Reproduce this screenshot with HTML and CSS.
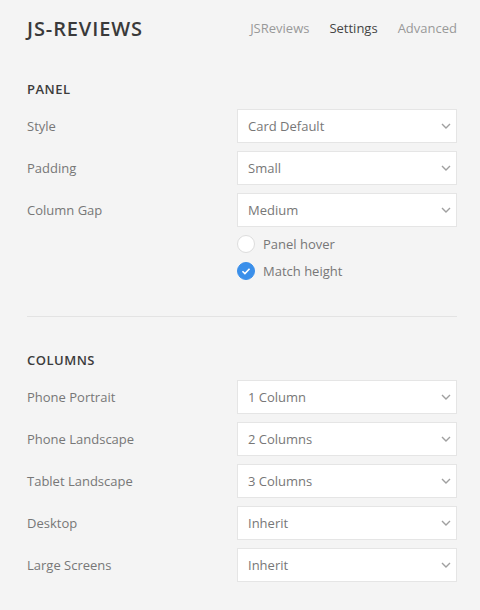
FILE: index.html
```html
<!DOCTYPE html>
<html>
<head>
<meta charset="utf-8">
<link rel="stylesheet" href="styles.css">
</head>
<body>
<div class="page">
  <header class="top">
    <div class="logo">JS-REVIEWS</div>
    <nav class="nav">
      <span class="nav-item">JSReviews</span>
      <span class="nav-item active">Settings</span>
      <span class="nav-item">Advanced</span>
    </nav>
  </header>

  <section class="section panel">
    <h2 class="section-title">PANEL</h2>
    <div class="row"><div class="label">Style</div><div class="select"><span>Card Default</span><svg class="chev" viewBox="0 0 10 6"><path d="M1 1 L5 5 L9 1"/></svg></div></div>
    <div class="row"><div class="label">Padding</div><div class="select"><span>Small</span><svg class="chev" viewBox="0 0 10 6"><path d="M1 1 L5 5 L9 1"/></svg></div></div>
    <div class="row"><div class="label">Column Gap</div><div class="select"><span>Medium</span><svg class="chev" viewBox="0 0 10 6"><path d="M1 1 L5 5 L9 1"/></svg></div></div>
    <div class="checks">
      <div class="check"><span class="circle"></span><span>Panel hover</span></div>
      <div class="check"><span class="circle on"><svg viewBox="0 0 18 18"><path d="M5 9.3 L7.8 12 L13 6.5"/></svg></span><span>Match height</span></div>
    </div>
  </section>

  <hr class="divider">

  <section class="section columns">
    <h2 class="section-title">COLUMNS</h2>
    <div class="row"><div class="label">Phone Portrait</div><div class="select"><span>1 Column</span><svg class="chev" viewBox="0 0 10 6"><path d="M1 1 L5 5 L9 1"/></svg></div></div>
    <div class="row"><div class="label">Phone Landscape</div><div class="select"><span>2 Columns</span><svg class="chev" viewBox="0 0 10 6"><path d="M1 1 L5 5 L9 1"/></svg></div></div>
    <div class="row"><div class="label">Tablet Landscape</div><div class="select"><span>3 Columns</span><svg class="chev" viewBox="0 0 10 6"><path d="M1 1 L5 5 L9 1"/></svg></div></div>
    <div class="row"><div class="label">Desktop</div><div class="select"><span>Inherit</span><svg class="chev" viewBox="0 0 10 6"><path d="M1 1 L5 5 L9 1"/></svg></div></div>
    <div class="row"><div class="label">Large Screens</div><div class="select"><span>Inherit</span><svg class="chev" viewBox="0 0 10 6"><path d="M1 1 L5 5 L9 1"/></svg></div></div>
  </section>
</div>
</body>
</html>
```

FILE: styles.css
```css
html, body {
  margin: 0;
  padding: 0;
  background: #f4f4f4;
}
body {
  font-family: "Open Sans", "Noto Sans", sans-serif;
  color: #777;
  font-size: 13px;
  height: 610px;
  overflow: hidden;
}
.page {
  padding: 0 23px 0 27px;
}
.top {
  display: flex;
  align-items: center;
  justify-content: space-between;
  height: 56px;
}
.logo {
  font-family: "Open Sans", sans-serif;
  font-weight: 600;
  font-size: 20px;
  letter-spacing: 0.9px;
  color: #3a3a3a;
}
.nav {
  display: flex;
  gap: 20px;
  font-size: 13px;
}
.nav-item {
  color: #999;
}
.nav-item.active {
  color: #444;
}
.section-title {
  margin: 0;
  font-size: 13px;
  font-weight: 600;
  color: #3c3c3c;
  line-height: 18px;
  letter-spacing: 0.5px;
}
.panel {
  padding-top: 24px;
}
.panel .section-title {
  margin-bottom: 11px;
}
.row {
  display: flex;
  align-items: center;
  height: 34px;
  margin-bottom: 8px;
}
.label {
  width: 210px;
  color: #777;
}
.select {
  flex: 1;
  height: 32px;
  background: #fff;
  border: 1px solid #e5e5e5;
  display: flex;
  align-items: center;
  justify-content: space-between;
  padding: 0 5px 0 10px;
  color: #777;
}
.chev {
  width: 10px;
  height: 6px;
  fill: none;
  stroke: #a0a0a0;
  stroke-width: 1.4;
}
.checks {
  margin-left: 210px;
  margin-top: 2px;
  display: flex;
  flex-direction: column;
  gap: 9px;
}
.check {
  display: flex;
  align-items: center;
  gap: 8px;
  height: 18px;
  color: #777;
}
.circle {
  width: 16px;
  height: 16px;
  border: 1px solid #ddd;
  border-radius: 50%;
  background: #fff;
  display: inline-flex;
}
.circle.on {
  background: #3a8fea;
  border-color: #3a8fea;
}
.circle svg {
  width: 16px;
  height: 16px;
  fill: none;
  stroke: #fff;
  stroke-width: 1.8;
}
.divider {
  border: 0;
  border-top: 1px solid #e3e3e3;
  margin: 36px 0 0 0;
}
.columns {
  padding-top: 34px;
}
.columns .section-title {
  margin-bottom: 11px;
}
```
